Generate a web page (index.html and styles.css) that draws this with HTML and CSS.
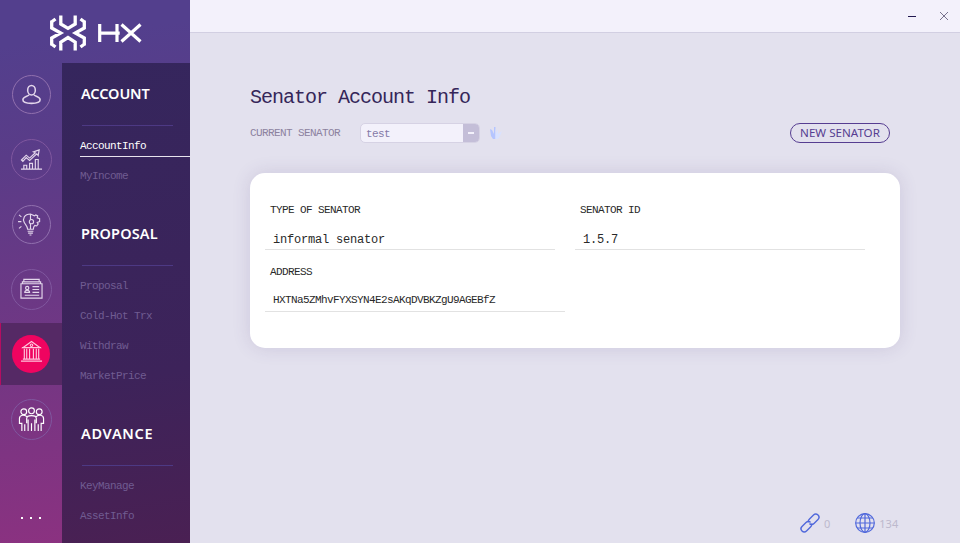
FILE: index.html
```html
<!DOCTYPE html>
<html lang="en">
<head>
<meta charset="utf-8">
<title>HX</title>
<link rel="stylesheet" href="styles.css">
</head>
<body>
<div class="window">
  <aside class="side">
    <header class="brand">
      <svg class="mark" viewBox="0 0 36 36" fill="none" stroke="#fff" stroke-width="3.300"><path d="M10.800 .5v8.500l7.200 4.300L25.200 9V.5M10.800 35.500v-8.300l7.200-4.700 7.200 4.700v8.300M1.700 5.500v7.500l9 5-9 5v7.500M34.300 5.500v7.500l-9 5 9 5v7.500M1.500 7l4-3M34.500 7l-4-3M1.500 29l4 3M34.500 29l-4 3"/></svg>
      <svg class="name" viewBox="0 0 44 18" preserveAspectRatio="none" fill="none" stroke="#fff" stroke-width="3.200"><path d="M1.700 0v18M19 0v18M1.700 9.200h20M23.500 .5l19 17M42.500 .5l-19 17"/></svg>
    </header>
    <nav class="rail">
      <a class="cell"><span class="ring strong"><svg viewBox="0 0 24 24"><ellipse cx="12" cy="7.500" rx="4" ry="5"/><path d="M9.500 12c0 2-6.500 2-6.500 5.500 0 5 18 5 18 0 0-3.500-6.500-3.500-6.500-5.500"/></svg></span></a>
      <a class="cell"><span class="ring"><svg viewBox="0 0 24 24"><path d="M1 22h22M4 22v-4h3v4M10 22v-6h3v6M16 22V12h3v10M1.500 12.500l5-5 3.500 3L16 5l-2-1 6-2-1 6-1.500-2-7.500 7-3.500-3-3.500 4z"/></svg></span></a>
      <a class="cell"><span class="ring strong"><svg viewBox="0 0 24 24"><path d="M12 1C5.500 1 3.500 6 5.500 10c1 2 3.500 4 3.500 7h6c0-2 .5-3 1.500-4l2 .5 1.500-2-1-1.500 2.500-1V6l-2.500-1 .5-2-2-1-1.500 1zM12 1v6M12 11v6M9 19h6M9.500 21h5M11 23h2M0 2l2.500 2M-1 9h3.500M0 16l2.500-2"/><circle cx="13" cy="9" r="2.200"/></svg></span></a>
      <a class="cell"><span class="ring"><svg viewBox="0 0 24 24"><path d="M1 6h22v15H1zM2.500 6V4h19v2M4 4V1.500h16V4M5 15c0-3 5-3 5 0zM13 9h7M13 12h7M13 15h7M5 18h15"/><circle cx="7.500" cy="10.500" r="1.700"/></svg></span></a>
      <a class="cell on"><span class="ring"><svg viewBox="0 0 24 24"><path d="M1 22h22M3 20h18M3 8h18L12 1.500zM2 8h20M4.500 9v11M7 9v11M10 9v11M14 9v11M17 9v11M19.500 9v11"/><circle cx="12" cy="5.500" r="1.300"/></svg></span></a>
      <a class="cell"><span class="ring people"><svg viewBox="0 0 28 28"><circle cx="6" cy="6" r="3"/><circle cx="14" cy="5" r="3"/><circle cx="22" cy="6" r="3"/><path d="M4 26V18H1.500v-5c0-4 6-4.500 8-1.500M24 26v-8h2.500v-5c0-4-6-4.500-8-1.500M9 18v-5c0-4 10-4 10 0v5M10.500 14v12M17.500 14v12M14 18v8M7 19v7M21 19v7"/></svg></span></a>
      <a class="more"><i></i><i></i><i></i></a>
    </nav>
    <nav class="menu">
      <section><h2>ACCOUNT</h2><a class="active">AccountInfo</a><a>MyIncome</a></section>
      <section><h2>PROPOSAL</h2><a>Proposal</a><a>Cold-Hot Trx</a><a>Withdraw</a><a>MarketPrice</a></section>
      <section><h2 class="spaced">ADVANCE</h2><a>KeyManage</a><a>AssetInfo</a></section>
    </nav>
  </aside>
  <main class="main">
    <div class="titlebar">
      <svg viewBox="0 0 10 10"><path d="M1 5.500h8" stroke="#21184f"/></svg>
      <svg viewBox="0 0 10 10"><path d="M1 1l8 8M9 1L1 9" stroke="#77728d"/></svg>
    </div>
    <div class="content">
      <h1>Senator Account Info</h1>
      <div class="tools">
        <span class="label">CURRENT SENATOR</span>
        <div class="select"><span>test</span><b><i></i></b></div>
        <svg class="hand" viewBox="0 0 12 13"><path d="M0 2l2 1 2 4V0h1.500v12H3L1 9z" fill="#b5c5ff"/><path d="M5.500 1l1 5L8 2v5l4-3-2 5-2 3H5.500z" fill="#d9e2ff"/></svg>
        <button>NEW SENATOR</button>
      </div>
      <div class="card">
        <div class="field"><label>TYPE OF SENATOR</label><p>informal senator</p></div>
        <div class="field"><label>SENATOR ID</label><p>1.5.7</p></div>
        <div class="field wide"><label>ADDRESS</label><p class="address">HXTNa5ZMhvFYXSYN4E2sAKqDVBKZgU9AGEBfZ</p></div>
      </div>
    </div>
    <footer>
      <svg viewBox="0 0 20 20"><path d="M8.500 9.500C7.500 8 8.500 7 9.500 6l4-4c3-3 7.500 1.500 4.500 4.500l-4 4c-1.500 1.500-3.500 1.500-4.500 0M11.500 10.500c1 1.500 0 2.500-1 3.500l-4 4c-3 3-7.500-1.500-4.500-4.500l4-4c1.500-1.500 3.500-1.500 4.500 0"/></svg><span>0</span>
      <svg class="globe" viewBox="0 0 20 20"><circle cx="10" cy="10" r="9.300"/><ellipse cx="10" cy="10" rx="5" ry="9.300"/><path d="M10 .7v18.600M.7 10h18.600M2.500 5h15M2.500 15h15"/></svg><span>134</span>
    </footer>
  </main>
</div>
</body>
</html>
```
FILE: styles.css
```css
* { box-sizing: border-box; }
body { margin: 0; font-family: "Liberation Mono", monospace; }
h1, h2, p { margin: 0; font-weight: normal; }
svg { display: block; fill: none; overflow: visible; }
.window { display: grid; grid-template-columns: 190px 1fr; width: 960px; height: 543px; overflow: hidden; }
.side { display: grid; grid-template: 63px 480px / 62px 128px; background: linear-gradient(172deg, #533f8d 8%, #5a3c88 28%, #703784 60%, #8d3180 100%); }
.brand { grid-column: 1 / 3; display: flex; align-items: center; padding: 2px 0 0 50px; gap: 12px; }
.mark { width: 36px; height: 36px; }
.name { width: 44px; height: 18px; }
.rail { display: flex; flex-direction: column; gap: 3px; }
.cell { height: 62px; flex: none; display: grid; place-items: center; padding-left: 1px; }
.ring { width: 41px; height: 41px; border: 1px solid #80579f; border-radius: 50%; display: grid; place-items: center; }
.strong { width: 39px; height: 39px; border-color: #9170ae; }
.ring svg { width: 23px; height: 23px; stroke: #e3d6eb; stroke-width: 1.2; }
.strong svg { margin-right: 2px; }
.cell:first-child svg { stroke-width: 1.6; margin-right: 0; }
.people svg { width: 27px; height: 27px; stroke: #fff; }
.on { background: #552965; padding-left: 0; box-shadow: inset 1px 0 #b50d61; }
.on .ring { width: 38px; height: 38px; border: 0; background: #ef0460; }
.on .ring svg { stroke: #ffc4db; margin-bottom: 5px; }
.more { display: flex; gap: 7px; padding: 64px 0 0 21px; }
.more i { width: 2px; height: 2px; background: #fff; }
.menu { background: linear-gradient(172deg, #35265d, #3d235a 65%, #4a2053); display: flex; flex-direction: column; gap: 13px; }
.menu section { padding-left: 18px; }
.menu h2 { height: 63px; width: 93px; margin-bottom: 5px; padding-left: 1px; color: #fff; font: 600 14.5px/61px "Noto Sans", sans-serif; letter-spacing: -.1px; background: linear-gradient(#4d3984, #4d3984) 2px 62px / 91px 1px no-repeat; }
.menu section:nth-child(2) h2 { letter-spacing: .15px; }
.menu .spaced { letter-spacing: .7px; }
.menu a { display: block; height: 30px; font-size: 11px; letter-spacing: -.6px; line-height: 30px; color: #705c91; }
.menu section { margin-bottom: -1px; }
.menu .active { color: #fff; background: linear-gradient(#e8e3ee, #e8e3ee) 0 25px / 110px 1px no-repeat; }
.main { display: grid; grid-template-rows: 33px 1fr 40px; background: #e3e1ee; }
.titlebar { background: #f3f1fb; border-bottom: 1px solid #d2cfe2; display: flex; align-items: center; justify-content: flex-end; gap: 22px; padding-right: 11px; }
.titlebar svg { width: 10px; height: 10px; }
.content { padding: 51px 60px 0; }
h1 { font-size: 20px; letter-spacing: -1px; line-height: 28px; color: #352659; height: 39px; }
.tools { display: flex; align-items: center; height: 20px; margin-bottom: 30px; }
.label { width: 110px; font-size: 11px; letter-spacing: -.6px; color: #8c829f; }
.select { width: 120px; height: 20px; display: flex; border: 1px solid #d6d2e4; border-radius: 5px; background: #f3f1fb; overflow: hidden; font-size: 11px; letter-spacing: -.6px; line-height: 20px; color: #857aa8; }
.select span { flex: 1; padding-left: 5px; }
.select b { width: 16px; background: #c4bed8; padding: 8px 5px; }
.select i { display: block; width: 6px; height: 2px; background: #f3f1fb; }
.hand { width: 12px; height: 13px; margin-left: 10px; }
button { margin: 0 10px 0 auto; width: 100px; height: 20px; padding: 0; border: 1px solid #563d91; border-radius: 10px; background: none; color: #563d91; font: 11.6px/18px "Noto Sans", sans-serif; white-space: nowrap; }
.card { width: 650px; height: 175px; background: #fff; border-radius: 15px; box-shadow: 0 0 18px rgba(85, 70, 130, .16); padding: 30px 35px 36px 15px; display: grid; grid-template: 47px 62px / 290px 290px; column-gap: 20px; }
.field { border-bottom: 1px solid #e2e2e2; color: #292929; display: flex; flex-direction: column; }
.field label { font-size: 11px; letter-spacing: -.6px; line-height: 14px; padding-left: 5px; }
.field p { font-size: 12px; letter-spacing: -.2px; line-height: 16px; margin-top: auto; padding: 0 0 1px 8px; }
.field .address { font-size: 11px; letter-spacing: -.6px; padding-bottom: 3px; }
.wide { width: 300px; padding-top: 15px; }
.content { margin-right: 0; padding-right: 60px; }
footer { display: flex; align-items: center; padding-left: 610px; font: 11px "Noto Sans", sans-serif; color: #bdb9cd; }
footer svg { width: 20px; height: 20px; stroke: #5068db; stroke-width: 1.4; }
footer span { margin-left: 4px; }
footer .globe { margin-left: 25px; stroke-width: 1.2; }
```
